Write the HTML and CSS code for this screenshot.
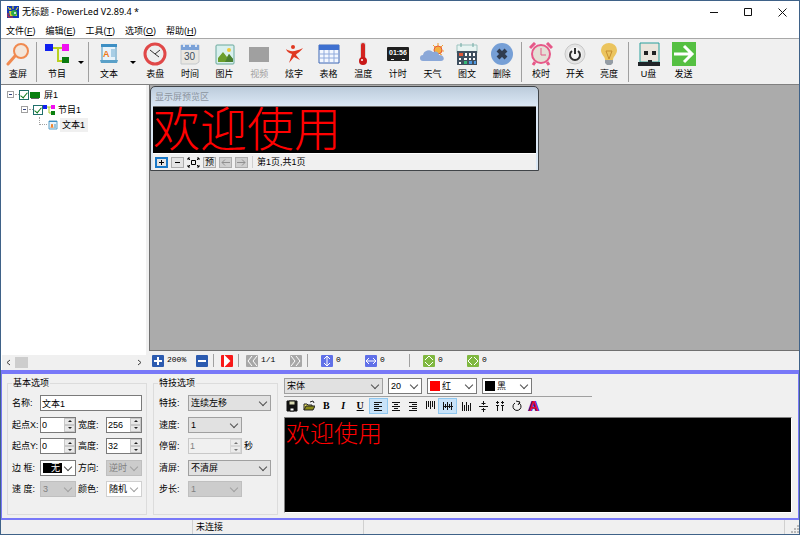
FILE: index.html
```
<!DOCTYPE html>
<html lang="zh-CN">
<head>
    <meta charset="UTF-8">
    <meta name="viewport" content="width=device-width, initial-scale=1.0">
    <title>无标题 - PowerLed V2.89.4 *</title>
    <link rel="stylesheet" href="styles.css">
</head>
<body>
    <div class="window">
        <header class="titlebar">
            <svg class="app-icon" viewBox="0 0 12 12"><rect width="12" height="12" fill="#1238b8"/><path d="M1 1l2 3M6 0v3M11 1L9 4M3 2l1 2" stroke="#f4e420" fill="none"/><path d="M2 5h5l3 2v3H3z" fill="#d8d030"/><circle cx="7" cy="7" r="3" fill="#2aa84a"/><path d="M1 7v4h5" stroke="#e02a20" fill="none"/><circle cx="8" cy="7" r="1" fill="#fff"/></svg>
            <span class="title">无标题 - PowerLed V2.89.4 *</span>
            <button class="win-button" aria-label="最小化"><svg viewBox="0 0 9 9"><path d="M0 4.500h8"/></svg></button>
            <button class="win-button" aria-label="最大化"><svg viewBox="0 0 9 9"><path d="M.5.5h7v7h-7z"/></svg></button>
            <button class="win-button" aria-label="关闭"><svg viewBox="0 0 9 9"><path d="M.5.5l8 8M8.500.5l-8 8"/></svg></button>
        </header>

        <nav class="menubar">
            <button>文件(<u>F</u>)</button>
            <button>编辑(<u>E</u>)</button>
            <button>工具(<u>T</u>)</button>
            <button>选项(<u>O</u>)</button>
            <button>帮助(<u>H</u>)</button>
        </nav>

        <div class="toolbar">
            <button class="tool">
                <svg viewBox="0 0 24 24"><path d="M9 14L2 22" stroke="#f08a50" stroke-width="3" stroke-linecap="round"/><circle cx="15" cy="9" r="7" fill="#f3e6da" stroke="#f08a50" stroke-width="2"/></svg>
                <span>查屏</span>
            </button>
            <i class="divider"></i>
            <button class="tool wide">
                <svg viewBox="0 0 24 24"><path d="M8 6h9M13 6v13h5" fill="none" stroke="#b8d020" stroke-width="2"/><path d="M0 2h8v7H0z" fill="#1020f0"/><path d="M17 2h7v7h-7z" fill="#f010f0"/><path d="M17 15h7v6h-7z" fill="#0a7a10"/></svg>
                <span>节目</span>
            </button>
            <button class="drop" aria-label="节目菜单"></button>
            <i class="divider"></i>
            <button class="tool wide">
                <svg viewBox="0 0 24 24"><path d="M5 3h14v17H5z" fill="#e8f3fa" stroke="#4a93bd"/><path d="M4 2h16v3H4z" fill="#3d8fc4"/><path d="M3 18h18l-1 3H4z" fill="#5aa0c8"/><text x="6" y="15" class="icon-letter">A</text><path d="M14 8h4M14 10h4M14 12h4M14 14h4" stroke="#6ba9d0"/></svg>
                <span>文本</span>
            </button>
            <button class="drop" aria-label="文本菜单"></button>
            <div class="tools insert">
                <button class="tool">
                    <svg viewBox="0 0 24 24"><circle cx="12" cy="12" r="10" fill="#eceeee" stroke="#e04848" stroke-width="3"/><path d="M7 8l5 4 5-4M12 12l4 3" fill="none" stroke="#333"/></svg>
                    <span>表盘</span>
                </button>
                <button class="tool">
                    <svg viewBox="0 0 24 24"><path d="M3 3h18v17l-3 2H3z" fill="#e9e7e2" stroke="#c5c9cc"/><path d="M3 3h18v5H3z" fill="#7ba2d8"/><path d="M6 1v4M12 1v4M18 1v4" stroke="#dce8f8" stroke-width="2"/><text x="6" y="18" class="icon-number">30</text></svg>
                    <span>时间</span>
                </button>
                <button class="tool">
                    <svg viewBox="0 0 24 24"><rect x="3" y="3" width="18" height="19" rx="1" fill="#d8f0ee" stroke="#69a89c"/><path d="M5 20v-4l5-6 4 5 2-3 4 5v3z" fill="#6b9e2c"/><path d="M12 20l4-8 4 5v3z" fill="#4a8030"/><circle cx="16" cy="8" r="2" fill="#f0c838"/></svg>
                    <span>图片</span>
                </button>
                <button class="tool" disabled>
                    <svg viewBox="0 0 24 24"><path d="M2 5h20v15H2z" fill="#a0a0a0"/></svg>
                    <span>视频</span>
                </button>
                <button class="tool">
                    <svg viewBox="0 0 24 24"><circle cx="11" cy="5" r="2" fill="#e03820"/><path d="M4 7c4 3 9 3 17-1-4 5-6 5-7 7l4 5-6-3-5 6 3-9c-3-1-5-2-6-5z" fill="#e03820"/></svg>
                    <span>炫字</span>
                </button>
                <button class="tool">
                    <svg viewBox="0 0 24 24"><path d="M2 3h20v18H2z" fill="#f4f8ff" stroke="#3c66b4"/><path d="M2 3h20v5H2z" fill="#3e70d0"/><path d="M2 12h20M2 16h20M7 8v13M12 8v13M17 8v13" stroke="#8faadc"/></svg>
                    <span>表格</span>
                </button>
                <button class="tool">
                    <svg viewBox="0 0 24 24"><path d="M12 3v15" stroke="#d8d8d8" stroke-width="6" stroke-linecap="round"/><path d="M12 3v15" stroke="#d42420" stroke-width="4" stroke-linecap="round"/><circle cx="12" cy="19" r="4" fill="#c81818"/><circle cx="11" cy="18" r="1" fill="#fff"/></svg>
                    <span>温度</span>
                </button>
                <button class="tool">
                    <svg viewBox="0 0 24 24"><rect x="1" y="5" width="22" height="14" rx="1" fill="#202020"/><path d="M5 17.500h3M16 17.500h3" stroke="#eee"/><text x="3" y="13" class="icon-timer">01:56</text></svg>
                    <span>计时</span>
                </button>
                <button class="tool">
                    <svg viewBox="0 0 24 24"><path d="M18 1v3M13 3l2 2M23 3l-2 2M24 9h-3M22 13l-2-1" stroke="#f0a030"/><circle cx="18" cy="8" r="4" fill="#f4b040" stroke="#e85838"/><path d="M3 19a3 3 0 0 1 0-6 6 6 0 0 1 10-3 4 4 0 0 1 6 3c6 0 6 6 2 6z" fill="#8ba8d8"/></svg>
                    <span>天气</span>
                </button>
                <button class="tool">
                    <svg viewBox="0 0 24 24"><path d="M2 3h20v8H2z" fill="#e8f4f2" stroke="#9cc4c0"/><path d="M6 1v4M18 1v4" stroke="#6fa8a2"/><path d="M2 9h20v14H2z" fill="#405060"/><path d="M4 11h4v3H4z" fill="#e05838"/><path d="M10 11h2v3h-2zM14 11h2v3h-2zM18 11h2v3h-2zM4 16h2v2H4zM9 16h3v2H9zM14 16h2v2h-2zM18 16h2v2h-2zM4 20h2v2H4z" fill="#fff"/><path d="M9 19h3v3H9z" fill="#36b878"/><path d="M14 19h3v3h-3zM19 19h2v3h-2z" fill="#4f98e0"/></svg>
                    <span>图文</span>
                </button>
                <button class="tool">
                    <svg viewBox="0 0 24 24"><circle cx="12" cy="12" r="11" fill="#769fd6"/><path d="M8 8l8 8M16 8l-8 8" stroke="#303c50" stroke-width="4"/></svg>
                    <span>删除</span>
                </button>
            </div>
            <i class="divider"></i>
            <div class="tools control">
                <button class="tool">
                    <svg viewBox="0 0 24 24"><path d="M6 20l-2 3M18 20l2 3M1 6l5-5M18 1l5 5" stroke="#e65888" stroke-width="3"/><circle cx="12" cy="12" r="9" fill="#e4dfd5" stroke="#e65888" stroke-width="2"/><path d="M12 6v7h5" fill="none" stroke="#e65888"/></svg>
                    <span>校时</span>
                </button>
                <button class="tool">
                    <svg viewBox="0 0 24 24"><circle cx="12" cy="12" r="10" fill="#e4e4e4" stroke="#c8c8c8"/><circle cx="12" cy="12" r="7" fill="#f4f4f4"/><path d="M9 9a5 5 0 1 0 6 0M12 6v6" fill="none" stroke="#303030" stroke-width="2"/></svg>
                    <span>开关</span>
                </button>
                <button class="tool">
                    <svg viewBox="0 0 24 24"><path d="M8 18c0-4-4-5-4-10a8 7 0 0 1 16 0c0 5-4 6-4 10z" fill="#ebc45e"/><path d="M9 9l3 8 3-8z" fill="none" stroke="#c58e30"/><path d="M8 18h8v3l-2 2h-4l-2-2z" fill="#949ca4"/></svg>
                    <span>亮度</span>
                </button>
            </div>
            <i class="divider"></i>
            <div class="tools output">
                <button class="tool">
                    <svg viewBox="0 0 24 24"><path d="M3 1h19v19H3z" fill="#eae5dc" stroke="#28a09c"/><path d="M7 9h4v4H7zM15 9h4v4h-4z" fill="#202020"/><path d="M1 20h10v-2h4v2h8v4H1z" fill="#202428"/></svg>
                    <span>U盘</span>
                </button>
                <button class="tool">
                    <svg viewBox="0 0 24 24"><path d="M0 0h24v24H0z" fill="#55c042"/><path d="M2 12h17M12 4l8 8-8 8" fill="none" stroke="#fff" stroke-width="3"/></svg>
                    <span>发送</span>
                </button>
            </div>
        </div>

        <div class="workspace">
            <aside class="sidebar">
                <ul class="tree">
                    <li class="level-1">
                        <i class="expander"></i>
                        <input type="checkbox" id="screen1" checked>
                        <svg class="node-icon" viewBox="0 0 10 8"><path d="M0 1h10v6H0z" fill="#0a8010"/><path d="M1 7h8v1H1z" fill="#666"/></svg>
                        <label for="screen1">屏1</label>
                    </li>
                    <li class="level-2">
                        <i class="expander"></i>
                        <input type="checkbox" id="program1" checked>
                        <svg class="node-icon program" viewBox="0 0 12 10"><path d="M3 2h6M6 2v6h3" fill="none" stroke="#a8c820"/><path d="M0 0h4v4H0z" fill="#1020f0"/><path d="M8 0h4v4H8z" fill="#f010f0"/><path d="M8 6h4v4H8z" fill="#0a8010"/></svg>
                        <label for="program1">节目1</label>
                    </li>
                    <li class="level-3">
                        <i class="branch"></i>
                        <svg class="node-icon" viewBox="0 0 10 10"><path d="M1 1h8v8H1z" fill="#e8f3fa" stroke="#5aa0c8"/><path d="M1 1h8v1H1z" fill="#3d8fc4"/><path d="M3 8l1-4 1 4" stroke="#f07818" fill="none"/><path d="M6 5h2M6 7h2" stroke="#4a93bd"/></svg>
                        <span class="selected">文本1</span>
                    </li>
                </ul>
                <div class="scrollbar">
                    <button aria-label="向左"><svg viewBox="0 0 5 7"><path d="M4 1L1 3.500 4 6"/></svg></button>
                    <i class="thumb"></i>
                    <button aria-label="向右"><svg viewBox="0 0 5 7"><path d="M1 1l3 2.500L1 6"/></svg></button>
                </div>
            </aside>

            <main class="main">
                <div class="canvas">
                    <section class="preview">
                        <h2>显示屏预览区</h2>
                        <div class="led">欢迎使用</div>
                        <div class="preview-bar">
                            <button class="active" aria-label="放大"><svg viewBox="0 0 9 7"><path d="M2 3.500h5M4.500 1v5"/></svg></button>
                            <button aria-label="缩小"><svg viewBox="0 0 9 7"><path d="M2 3.500h5"/></svg></button>
                            <button class="plain" aria-label="适合窗口"><svg viewBox="0 0 13 11"><path d="M1 1l2 2M12 1l-2 2M1 10l2-2M12 10l-2-2M1 3V1h2M10 1h2v2M12 8v2h-2M3 10H1V8M4.500 3.500h4v4h-4z"/></svg></button>
                            <button>预</button>
                            <button disabled aria-label="上一页"><svg viewBox="0 0 9 7"><path d="M9 3.500H1M4 .5l-3 3 3 3"/></svg></button>
                            <button disabled aria-label="下一页"><svg viewBox="0 0 9 7"><path d="M0 3.500h8M5 .5l3 3-3 3"/></svg></button>
                            <span class="pages">第1页,共1页</span>
                        </div>
                    </section>
                </div>

                <div class="zoombar">
                    <span class="cell"><button class="blue" aria-label="放大"><svg viewBox="0 0 12 12"><path d="M2 6h8M6 2v8"/></svg></button>200%</span>
                    <span class="cell short"><button class="blue" aria-label="缩小"><svg viewBox="0 0 12 12"><path d="M2 6h8"/></svg></button></span>
                    <i class="split"></i>
                    <span class="cell short"><button class="red" aria-label="播放"><svg viewBox="0 0 12 12"><path d="M4 2l4 4-4 4z" fill="#fff"/></svg></button></span>
                    <i class="split"></i>
                    <span class="cell"><button class="gray" aria-label="上一页"><svg viewBox="0 0 12 12"><path d="M6 1L2 6l4 5M11 1L7 6l4 5"/></svg></button>1/1</span>
                    <span class="cell short"><button class="gray" aria-label="下一页"><svg viewBox="0 0 12 12"><path d="M1 1l4 5-4 5M6 1l4 5-4 5"/></svg></button></span>
                    <i class="split far"></i>
                    <span class="cell"><button class="violet" aria-label="高度"><svg viewBox="0 0 12 12"><path d="M6 2v8M3 4l3-3 3 3M3 8l3 3 3-3"/></svg></button>0</span>
                    <span class="cell"><button class="violet" aria-label="宽度"><svg viewBox="0 0 12 12"><path d="M2 6h8M4 3L1 6l3 3M8 3l3 3-3 3"/></svg></button>0</span>
                    <i class="split far"></i>
                    <span class="cell"><button class="green" aria-label="垂直偏移"><svg viewBox="0 0 12 12"><path d="M2 5l4-4 4 4M2 7l4 4 4-4"/></svg></button>0</span>
                    <span class="cell"><button class="green" aria-label="水平偏移"><svg viewBox="0 0 12 12"><path d="M5 2L1 6l4 4M7 2l4 4-4 4"/></svg></button>0</span>
                </div>
            </main>
        </div>

        <div class="properties">
            <fieldset class="basic">
                <legend>基本选项</legend>
                <div class="row">
                    <label for="name">名称:</label>
                    <input type="text" id="name" class="field" value="文本1">
                </div>
                <div class="row">
                    <label for="startX">起点X:</label>
                    <span class="spin"><input type="text" id="startX" value="0"><button class="up" aria-label="增加"></button><button class="down" aria-label="减少"></button></span>
                    <label for="width">宽度:</label>
                    <span class="spin"><input type="text" id="width" value="256"><button class="up" aria-label="增加"></button><button class="down" aria-label="减少"></button></span>
                </div>
                <div class="row">
                    <label for="startY">起点Y:</label>
                    <span class="spin"><input type="text" id="startY" value="0"><button class="up" aria-label="增加"></button><button class="down" aria-label="减少"></button></span>
                    <label for="height">高度:</label>
                    <span class="spin"><input type="text" id="height" value="32"><button class="up" aria-label="增加"></button><button class="down" aria-label="减少"></button></span>
                </div>
                <div class="row">
                    <label for="border">边 框:</label>
                    <span class="combo white inverse"><select id="border"><option>无</option></select></span>
                    <label for="direction">方向:</label>
                    <span class="combo off"><select id="direction" disabled><option>逆时</option></select></span>
                </div>
                <div class="row">
                    <label for="borderSpeed">速 度:</label>
                    <span class="combo off"><select id="borderSpeed" disabled><option>3</option></select></span>
                    <label for="color">颜色:</label>
                    <span class="combo white pale"><select id="color"><option>随机</option></select></span>
                </div>
            </fieldset>

            <fieldset class="effects">
                <legend>特技选项</legend>
                <div class="row">
                    <label for="effect">特技:</label>
                    <span class="combo full"><select id="effect"><option>连续左移</option></select></span>
                </div>
                <div class="row">
                    <label for="speed">速度:</label>
                    <span class="combo"><select id="speed"><option>1</option></select></span>
                </div>
                <div class="row">
                    <label for="stay">停留:</label>
                    <span class="spin off"><input type="text" id="stay" value="1" disabled><button class="up" disabled aria-label="增加"></button><button class="down" disabled aria-label="减少"></button></span>
                    <span class="unit">秒</span>
                </div>
                <div class="row">
                    <label for="clear">清屏:</label>
                    <span class="combo full"><select id="clear"><option>不清屏</option></select></span>
                </div>
                <div class="row">
                    <label for="step">步长:</label>
                    <span class="combo off"><select id="step" disabled><option>1</option></select></span>
                </div>
            </fieldset>

            <section class="editor">
                <div class="font-row">
                    <span class="combo font-name"><select aria-label="字体"><option>宋体</option></select></span>
                    <span class="combo white font-size"><select aria-label="字号"><option>20</option></select></span>
                    <span class="combo white swatch red-swatch"><select aria-label="文字颜色"><option>红</option></select></span>
                    <span class="combo white swatch"><select aria-label="背景颜色"><option>黑</option></select></span>
                </div>
                <div class="format-row">
                    <button aria-label="保存"><svg viewBox="0 0 12 12"><path d="M1 1h10v10H1z" fill="#111"/><path d="M3 1h6v4H3z" fill="#d8d8b0"/><path d="M4 8h4v3H4z" fill="#fff"/></svg></button>
                    <button aria-label="打开"><svg viewBox="0 0 12 12"><path d="M1 10V4h3l1 1h4v2" fill="#f0e868" stroke="#222"/><path d="M1 10l2-4h9l-2 4z" fill="#8c8c18" stroke="#222"/><path d="M7 2l3-1 1 2" fill="none" stroke="#222"/></svg></button>
                    <button class="bold">B</button>
                    <button class="italic">I</button>
                    <button class="underline">U</button>
                    <button class="active" aria-label="左对齐"><svg viewBox="0 0 12 12"><path d="M2 2.500h8M2 4.500h5M2 6.500h8M2 8.500h5M2 10.500h8"/></svg></button>
                    <button aria-label="居中"><svg viewBox="0 0 12 12"><path d="M2 2.500h8M4 4.500h4M2 6.500h8M4 8.500h4M2 10.500h8"/></svg></button>
                    <button aria-label="右对齐"><svg viewBox="0 0 12 12"><path d="M2 2.500h8M5 4.500h5M2 6.500h8M5 8.500h5M2 10.500h8"/></svg></button>
                    <button aria-label="顶端对齐"><svg viewBox="0 0 12 12"><path d="M2.500 1v8M4.500 1v6M6.500 1v8M8.500 1v6M10.500 1v8"/></svg></button>
                    <button class="active" aria-label="垂直居中"><svg viewBox="0 0 12 12"><path d="M1.500 2v8M3.500 4v4M5.500 2v8M7.500 4v4M9.500 2v8M1 6.500h10"/></svg></button>
                    <button aria-label="底端对齐"><svg viewBox="0 0 12 12"><path d="M2.500 2v9M4.500 5v6M6.500 2v9M8.500 5v6M10.500 3v8"/></svg></button>
                    <button aria-label="行距"><svg viewBox="0 0 12 12"><path d="M2 6.500h9M6.500 1v4M6.500 8v4M4.500 3.500h4M4.500 9.500h4"/></svg></button>
                    <button aria-label="字距"><svg viewBox="0 0 12 12"><path d="M2 2.500h3M7 2.500h3M3.500 1v3M8.500 1v3M2 5.500h3M7 5.500h3M3.500 6v5M8.500 6v5"/></svg></button>
                    <button aria-label="旋转"><svg viewBox="0 0 12 12"><path d="M4 3a4 4 0 1 0 4 0M5 1l4 1-2 3"/></svg></button>
                    <button class="art">A</button>
                </div>
                <textarea aria-label="文本内容" spellcheck="false">欢迎使用</textarea>
            </section>
        </div>

        <footer class="statusbar">
            <span class="pane first"></span>
            <span class="pane state">未连接</span>
            <span class="pane rest"></span>
            <svg class="grip" viewBox="0 0 8 8"><path d="M6 0h2v2H6zM3 3h2v2H3zM6 3h2v2H6zM0 6h2v2H0zM3 6h2v2H3zM6 6h2v2H6z" fill="#b8b8b8"/></svg>
        </footer>
    </div>
</body>
</html>
```
FILE: styles.css
```
* {
    box-sizing: border-box;
}

body, button, input, select {
    font-family: "Liberation Sans", "Noto Sans CJK SC", sans-serif;
    font-size: 9px;
    line-height: 12px;
    color: #000;
}

body {
    margin: 0;
    background: #3f6288;
}

button {
    display: flex;
    align-items: center;
    justify-content: center;
    padding: 0;
    border: 0;
    background: none;
}

svg {
    display: block;
    flex: none;
}

.window {
    display: flex;
    flex-direction: column;
    min-height: 100vh;
    border: 1px solid #3f6288;
    background: #f0f0f0;
}

/* title and menu */
.titlebar {
    display: flex;
    align-items: stretch;
    height: 22px;
    padding-left: 6px;
    background: #fff;
}

.app-icon {
    width: 12px;
    height: 12px;
    align-self: center;
}

.title {
    flex: 1;
    align-self: center;
    margin-left: 3px;
    font-family: "Noto Sans", "Noto Sans CJK SC", sans-serif;
}

.win-button {
    width: 34px;
}

.win-button svg {
    width: 9px;
    height: 9px;
    fill: none;
    stroke: #111;
}

.menubar {
    display: flex;
    gap: 10px;
    height: 15px;
    padding-left: 5px;
    background: #fff;
}

/* toolbar */
.toolbar {
    display: flex;
    align-items: stretch;
    height: 47px;
    padding: 3px 0 2px 1px;
    border-top: 1px solid #a8a8a8;
    border-bottom: 1px solid #808080;
}

.tools {
    display: flex;
}

.insert {
    width: 381px;
}

.control {
    width: 102px;
}

.output {
    width: 70px;
}

.tool {
    flex: 1;
    flex-direction: column;
    justify-content: flex-start;
    gap: 1px;
}

.toolbar > .tool {
    flex: none;
    width: 32px;
}

.toolbar > .wide {
    width: 36px;
}

.tool svg {
    width: 24px;
    height: 24px;
}

.tool span {
    line-height: 15px;
}

.tool:disabled {
    color: #a0a0a0;
}

.icon-letter {
    font-size: 9px;
    font-weight: bold;
    fill: #f07818;
}

.icon-number {
    font-size: 10px;
    fill: #405060;
}

.icon-timer {
    font-size: 7px;
    font-weight: bold;
    fill: #fff;
}

.divider {
    width: 1px;
    margin: 0 2px;
    background: #a0a0a0;
}

.drop {
    width: 11px;
}

.drop::after {
    content: "";
    border: 3px solid transparent;
    border-top-color: #000;
    border-bottom: 0;
}

/* tree */
.workspace {
    flex: 1;
    display: flex;
}

.sidebar {
    display: flex;
    flex-direction: column;
    width: 148px;
    padding-left: 1px;
    border-right: 3px solid #f0f0f0;
    background: #fff;
}

.tree {
    flex: 1;
    margin: 0;
    padding: 2px 0 0 5px;
    list-style: none;
}

.tree li {
    display: flex;
    align-items: center;
    height: 15px;
}

.tree .level-2 {
    padding-left: 14px;
}

.tree .level-3 {
    padding-left: 32px;
}

.expander {
    position: relative;
    display: flex;
    align-items: center;
    width: 7px;
    height: 7px;
    margin-right: 5px;
    border: 1px solid #a0a0a0;
}

.expander::before {
    content: "";
    position: absolute;
    left: 7px;
    width: 4px;
    border-top: 1px dotted #a0a0a0;
}

.expander::after {
    content: "";
    flex: 1;
    height: 1px;
    margin: 0 1px;
    background: #304080;
}

.tree input {
    display: flex;
    justify-content: center;
    appearance: none;
    width: 10px;
    height: 10px;
    margin: 0;
    border: 1px solid #20706c;
}

.tree input:checked::after {
    content: "";
    width: 3px;
    height: 6px;
    border: solid #087818;
    border-width: 0 1px 1px 0;
    transform: rotate(40deg);
}

.node-icon {
    width: 10px;
    height: 10px;
    margin: 0 4px 0 1px;
}

.node-icon.program {
    width: 12px;
    margin: 0 3px 0 0;
}

.branch {
    width: 8px;
    height: 8px;
    margin-bottom: 8px;
    border: dotted #a0a0a0;
    border-width: 0 0 1px 1px;
}

.level-3 .node-icon {
    margin-right: 2px;
}

.selected {
    padding: 1px 3px 1px 2px;
    background: #f0f0f0;
}

.scrollbar {
    display: flex;
    align-items: center;
    height: 15px;
    background: #f0f0f0;
}

.scrollbar button {
    width: 13px;
}

.scrollbar button:last-child {
    margin-left: auto;
}

.scrollbar svg {
    width: 5px;
    height: 7px;
    fill: none;
    stroke: #404040;
}

.thumb {
    width: 13px;
    height: 11px;
    background: #cdcdcd;
}

/* preview area */
.main {
    flex: 1;
    display: flex;
    flex-direction: column;
}

.canvas {
    flex: 1;
    padding-top: 1px;
    border-bottom: 1px solid #707070;
    border-left: 1px solid #707070;
    background: #ababab;
}

.preview {
    width: 389px;
    padding: 1px 2px 0;
    border: 1px solid #404448;
    border-radius: 5px 5px 0 0;
    background: linear-gradient(#bccbdb, #dbe8f5 19px);
}

.preview h2 {
    height: 18px;
    margin: 0;
    padding-left: 2px;
    font-size: 9px;
    font-weight: normal;
    line-height: 18px;
    color: #8b949e;
}

.led {
    height: 48px;
    border-top: 1px solid #707070;
    border-bottom: 1px solid #fff;
    background: #000;
    font-family: "Liberation Sans", "Noto Sans CJK SC", sans-serif;
    font-size: 47px;
    font-weight: 300;
    line-height: 45px;
    color: #f00;
}

.preview-bar {
    display: flex;
    align-items: center;
    gap: 3px;
    height: 16px;
    padding-left: 2px;
    background: #f0f0f0;
}

.preview-bar button {
    width: 13px;
    height: 11px;
    border: 1px solid #adadad;
    background: #e4e4e4;
}

.preview-bar .active {
    border: 2px solid #1878c8;
}

.preview-bar .plain {
    border: 0;
    background: none;
}

.preview-bar button:disabled {
    background: #cfcfcf;
}

.preview-bar svg {
    width: 9px;
    height: 7px;
    fill: none;
    stroke: #000;
}

.preview-bar .plain svg {
    width: 13px;
    height: 11px;
}

.preview-bar button:disabled svg {
    stroke: #909090;
}

.pages {
    margin-left: 1px;
    padding-left: 4px;
    border-left: 1px solid #d0d0d0;
}

/* zoom bar */
.zoombar {
    display: flex;
    align-items: center;
    height: 19px;
    padding-left: 3px;
}

.cell {
    display: flex;
    gap: 3px;
    width: 44px;
    font-family: "Liberation Mono", monospace;
    font-size: 8px;
    line-height: 10px;
}

.cell.short {
    width: 17px;
}

.cell button {
    width: 12px;
    height: 12px;
    border-radius: 1px;
}

.cell svg {
    width: 12px;
    height: 12px;
    fill: none;
    stroke: #fff;
    stroke-width: 2;
}

.blue {
    background: #2c5bb0;
}

.cell .red {
    background: #f81818;
}

.gray {
    background: #a8a8a8;
}

.violet {
    background: #6070e8;
}

.green {
    background: #80b840;
}

.gray svg, .violet svg, .green svg {
    stroke-width: 1;
}

.split {
    width: 1px;
    height: 13px;
    margin-right: 7px;
    background: #a0a0a0;
}

.split.far {
    margin-right: 13px;
}

/* property panel */
.properties {
    display: flex;
    height: 150px;
    padding: 3px 6px 0 5px;
    border: 1px solid #7878f8;
    border-top-width: 4px;
    border-bottom-width: 2px;
}

fieldset {
    display: flex;
    flex-direction: column;
    justify-content: space-between;
    height: 138px;
    min-width: 0;
    margin: 0 6px 0 0;
    padding: 6px 4px 17px;
    border: 1px solid #dcdcdc;
}

legend {
    height: 12px;
    padding: 0 1px;
}

.row {
    display: flex;
    align-items: center;
}

.basic {
    width: 140px;
}

.effects {
    width: 125px;
}

.row label {
    flex: none;
    width: 28px;
    white-space: nowrap;
}

.spin + label, .combo + label {
    margin-left: 2px;
}

.effects label {
    width: 30px;
    padding-left: 1px;
}

.effects .combo, .effects .spin {
    flex: none;
    width: 54px;
}

.effects .full {
    width: 83px;
}

.unit {
    margin-left: 2px;
}

.field, .spin, .combo {
    flex: 1;
    min-width: 0;
    height: 16px;
    border: 1px solid #7a7a7a;
    background: #fff;
}

.field {
    padding: 0 1px;
}

.spin {
    display: grid;
    grid-template-columns: 1fr 11px;
}

.spin input {
    grid-row: span 2;
    min-width: 0;
    padding: 0 1px;
    border: 0;
    background: none;
}

.spin button {
    background: #e8e8e8;
    border: 1px solid #c8c8c8;
}

.spin button::after {
    content: "";
    border: 2px solid transparent;
}

.spin .up::after {
    border-top: 0;
    border-bottom-color: #222;
}

.spin .down::after {
    border-bottom: 0;
    border-top-color: #222;
}

.spin.off {
    border-color: #c8c8c8;
    background: #f0f0f0;
}

.spin.off button {
    opacity: .6;
}

.combo {
    position: relative;
    display: flex;
    border-color: #a0a0a0;
    background: #e1e1e1;
}

.combo::after {
    content: "";
    position: absolute;
    top: 3px;
    right: 4px;
    width: 5px;
    height: 5px;
    border: solid #505050;
    border-width: 0 1px 1px 0;
    transform: rotate(45deg);
    pointer-events: none;
}

.combo select {
    flex: 1;
    min-width: 0;
    appearance: none;
    padding: 0 0 0 2px;
    border: 0;
    background: none;
    line-height: 14px;
}

.combo.white {
    border-color: #7a7a7a;
    background: #fff;
}

.combo.off {
    border-color: #bfbfbf;
    background: #ccc;
}

.combo.pale {
    border-color: #d0d0d0;
}

.off::after, .pale::after {
    border-color: #a0a0a0;
}

.off select, .off input {
    color: #808080;
    opacity: 1;
}

.inverse select {
    flex: none;
    width: 19px;
    height: 10px;
    margin: 2px;
    padding-left: 8px;
    background: #000;
    color: #fff;
    line-height: 10px;
}

/* text editor */
.editor {
    flex: 1;
    display: flex;
    flex-direction: column;
    align-items: flex-start;
    padding-top: 1px;
}

.font-row {
    display: flex;
    gap: 5px;
    width: 308px;
    padding-bottom: 2px;
    border-bottom: 1px solid #a0a0a0;
}

.font-row .combo {
    flex: none;
}

.font-name {
    width: 99px;
}

.font-size {
    width: 34px;
}

.swatch {
    width: 50px;
}

.swatch::before {
    content: "";
    width: 10px;
    height: 10px;
    margin: 2px 0 0 2px;
    background: #000;
}

.red-swatch::before {
    background: #f00;
}

.format-row {
    display: flex;
    width: 258px;
    padding: 1px 0 3px;
}

.format-row button {
    flex: 1;
    height: 16px;
    font-family: "Liberation Serif", serif;
    font-size: 10px;
    font-weight: bold;
}

.format-row svg {
    width: 12px;
    height: 12px;
    fill: none;
    stroke: #111;
}

.format-row .active {
    border: 1px solid #90c8f0;
    background: #c8e2f8;
}

.format-row .italic {
    font-style: italic;
}

.format-row .underline {
    text-decoration: underline;
}

.format-row .art {
    font-family: "Liberation Sans", sans-serif;
    font-size: 14px;
    color: #e01030;
    text-shadow: 1px 0 #2020d0, -1px 0 #2020d0;
}

.editor textarea {
    width: 100%;
    height: 96px;
    margin: 0;
    padding: 1px;
    border: 1px solid #808080;
    border-right-color: #fff;
    border-bottom-color: #fff;
    outline: 0;
    resize: none;
    background: #000;
    font-family: "Noto Sans CJK SC", sans-serif;
    font-size: 24px;
    font-weight: 300;
    line-height: 26px;
    color: #f00;
}

/* status bar */
.statusbar {
    display: flex;
    height: 14px;
    background: #f0f0f0;
}

.pane {
    padding-left: 3px;
    border-right: 1px solid #d0d0d0;
    line-height: 14px;
}

.first {
    width: 192px;
}

.state {
    width: 171px;
}

.rest {
    flex: 1;
}

.grip {
    width: 8px;
    height: 8px;
    margin: 5px 0 0 6px;
}
```
